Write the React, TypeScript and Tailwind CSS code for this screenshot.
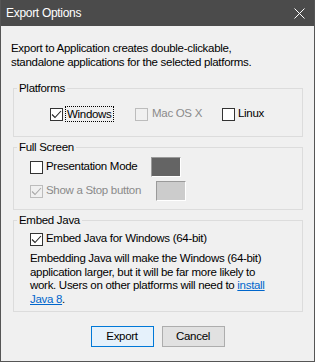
import React from 'react';

const font = { fontFamily: '"Liberation Sans", Arial, sans-serif' };

type CheckProps = { checked?: boolean; disabled?: boolean };

const CheckBox: React.FC<CheckProps> = ({ checked, disabled }) => (
  <span
    className={`w-[13px] h-[13px] shrink-0 border flex items-center justify-center ${
      disabled ? 'border-[#bcbcbc] bg-[#f0f0f0]' : 'border-[#333333] bg-white'
    }`}
  >
    {checked && (
      <svg width="11" height="11" viewBox="0 0 11 11" fill="none">
        <path
          d="M1 5.5 L4 8.5 L10 2"
          stroke={disabled ? '#a8a8a8' : '#222222'}
          strokeWidth="1.1"
        />
      </svg>
    )}
  </span>
);

const Swatch: React.FC<{ color: string }> = ({ color }) => (
  <span className="w-[30px] h-[20px] border-t border-l border-[#9a9a9a] border-r border-b border-r-white border-b-white flex">
    <span className={`flex-1 ${color}`} />
  </span>
);

const Legend: React.FC<{ children: React.ReactNode }> = ({ children }) => (
  <legend className="ml-[3px] px-[2px] leading-[14px] text-black">{children}</legend>
);

export default function App() {
  return (
    <div
      style={font}
      className="w-[315px] h-[362px] bg-[#f0f0f0] border-x border-b border-[#555555] flex flex-col text-[11.5px] tracking-[-0.3px] text-black"
    >
      {/* title bar */}
      <div className="h-[26px] bg-[#4b4b4b] flex items-center justify-between pl-[5px] pr-[9px] text-white text-[12px] shrink-0">
        <span>Export Options</span>
        <svg width="11" height="11" viewBox="0 0 11 11">
          <path d="M0.5 0.5 L10.5 10.5 M10.5 0.5 L0.5 10.5" stroke="#ffffff" strokeWidth="1" />
        </svg>
      </div>

      <div className="flex flex-col pl-[10px]">
        <p className="mt-[15px] leading-[14px]">
          Export to Application creates double-clickable,
          <br />
          standalone applications for the selected platforms.
        </p>

        {/* Platforms */}
        <fieldset className="mt-[12px] ml-[2px] w-[290px] border border-[#dcdcdc] pb-[14px]">
          <Legend>Platforms</Legend>
          <div className="mt-[11px] pl-[36px] flex items-center h-[16px]">
            <div className="w-[85px] flex items-center">
              <CheckBox checked />
              <span className="ml-[2px] px-[1px] border border-dotted border-black leading-[14px]">Windows</span>
            </div>
            <div className="w-[87px] flex items-center">
              <CheckBox disabled />
              <span className="ml-[4px] text-[#8a8a8a]">Mac OS X</span>
            </div>
            <div className="flex items-center">
              <CheckBox />
              <span className="ml-[3px]">Linux</span>
            </div>
          </div>
        </fieldset>

        {/* Full Screen */}
        <fieldset className="mt-[3px] ml-[2px] w-[290px] border border-[#dcdcdc] pb-[8px]">
          <Legend>Full Screen</Legend>
          <div className="mt-[3px] pl-[16px] flex flex-col gap-[4px]">
            <div className="h-[20px] flex items-center">
              <CheckBox />
              <span className="ml-[3px]">Presentation Mode</span>
              <span className="ml-[14px]">
                <Swatch color="bg-[#646464]" />
              </span>
            </div>
            <div className="h-[20px] flex items-center">
              <CheckBox checked disabled />
              <span className="ml-[3px] text-[#8a8a8a]">Show a Stop button</span>
              <span className="ml-[15px]">
                <Swatch color="bg-[#cccccc]" />
              </span>
            </div>
          </div>
        </fieldset>

        {/* Embed Java */}
        <fieldset className="mt-[3px] ml-[2px] w-[290px] border border-[#dcdcdc] pb-[5px]">
          <Legend>Embed Java</Legend>
          <div className="mt-[4px] pl-[16px] flex items-center h-[16px]">
            <CheckBox checked />
            <span className="ml-[3px]">Embed Java for Windows (64-bit)</span>
          </div>
          <p className="mt-[5px] pl-[16px] leading-[13.5px]">
            Embedding Java will make the Windows (64-bit)
            <br />
            application larger, but it will be far more likely to
            <br />
            work. Users on other platforms will need to{' '}
            <a className="text-[#0066cc] underline">
              install
              <br />
              Java 8
            </a>
            .
          </p>
        </fieldset>

        <div className="mt-[14px] pr-[10px] flex justify-center gap-[8px]">
          <button className="w-[63px] h-[21px] bg-[#e5f1fb] border border-[#0078d7] leading-[19px]">Export</button>
          <button className="w-[63px] h-[21px] bg-[#e1e1e1] border border-[#adadad] leading-[19px]">Cancel</button>
        </div>
      </div>
    </div>
  );
}
